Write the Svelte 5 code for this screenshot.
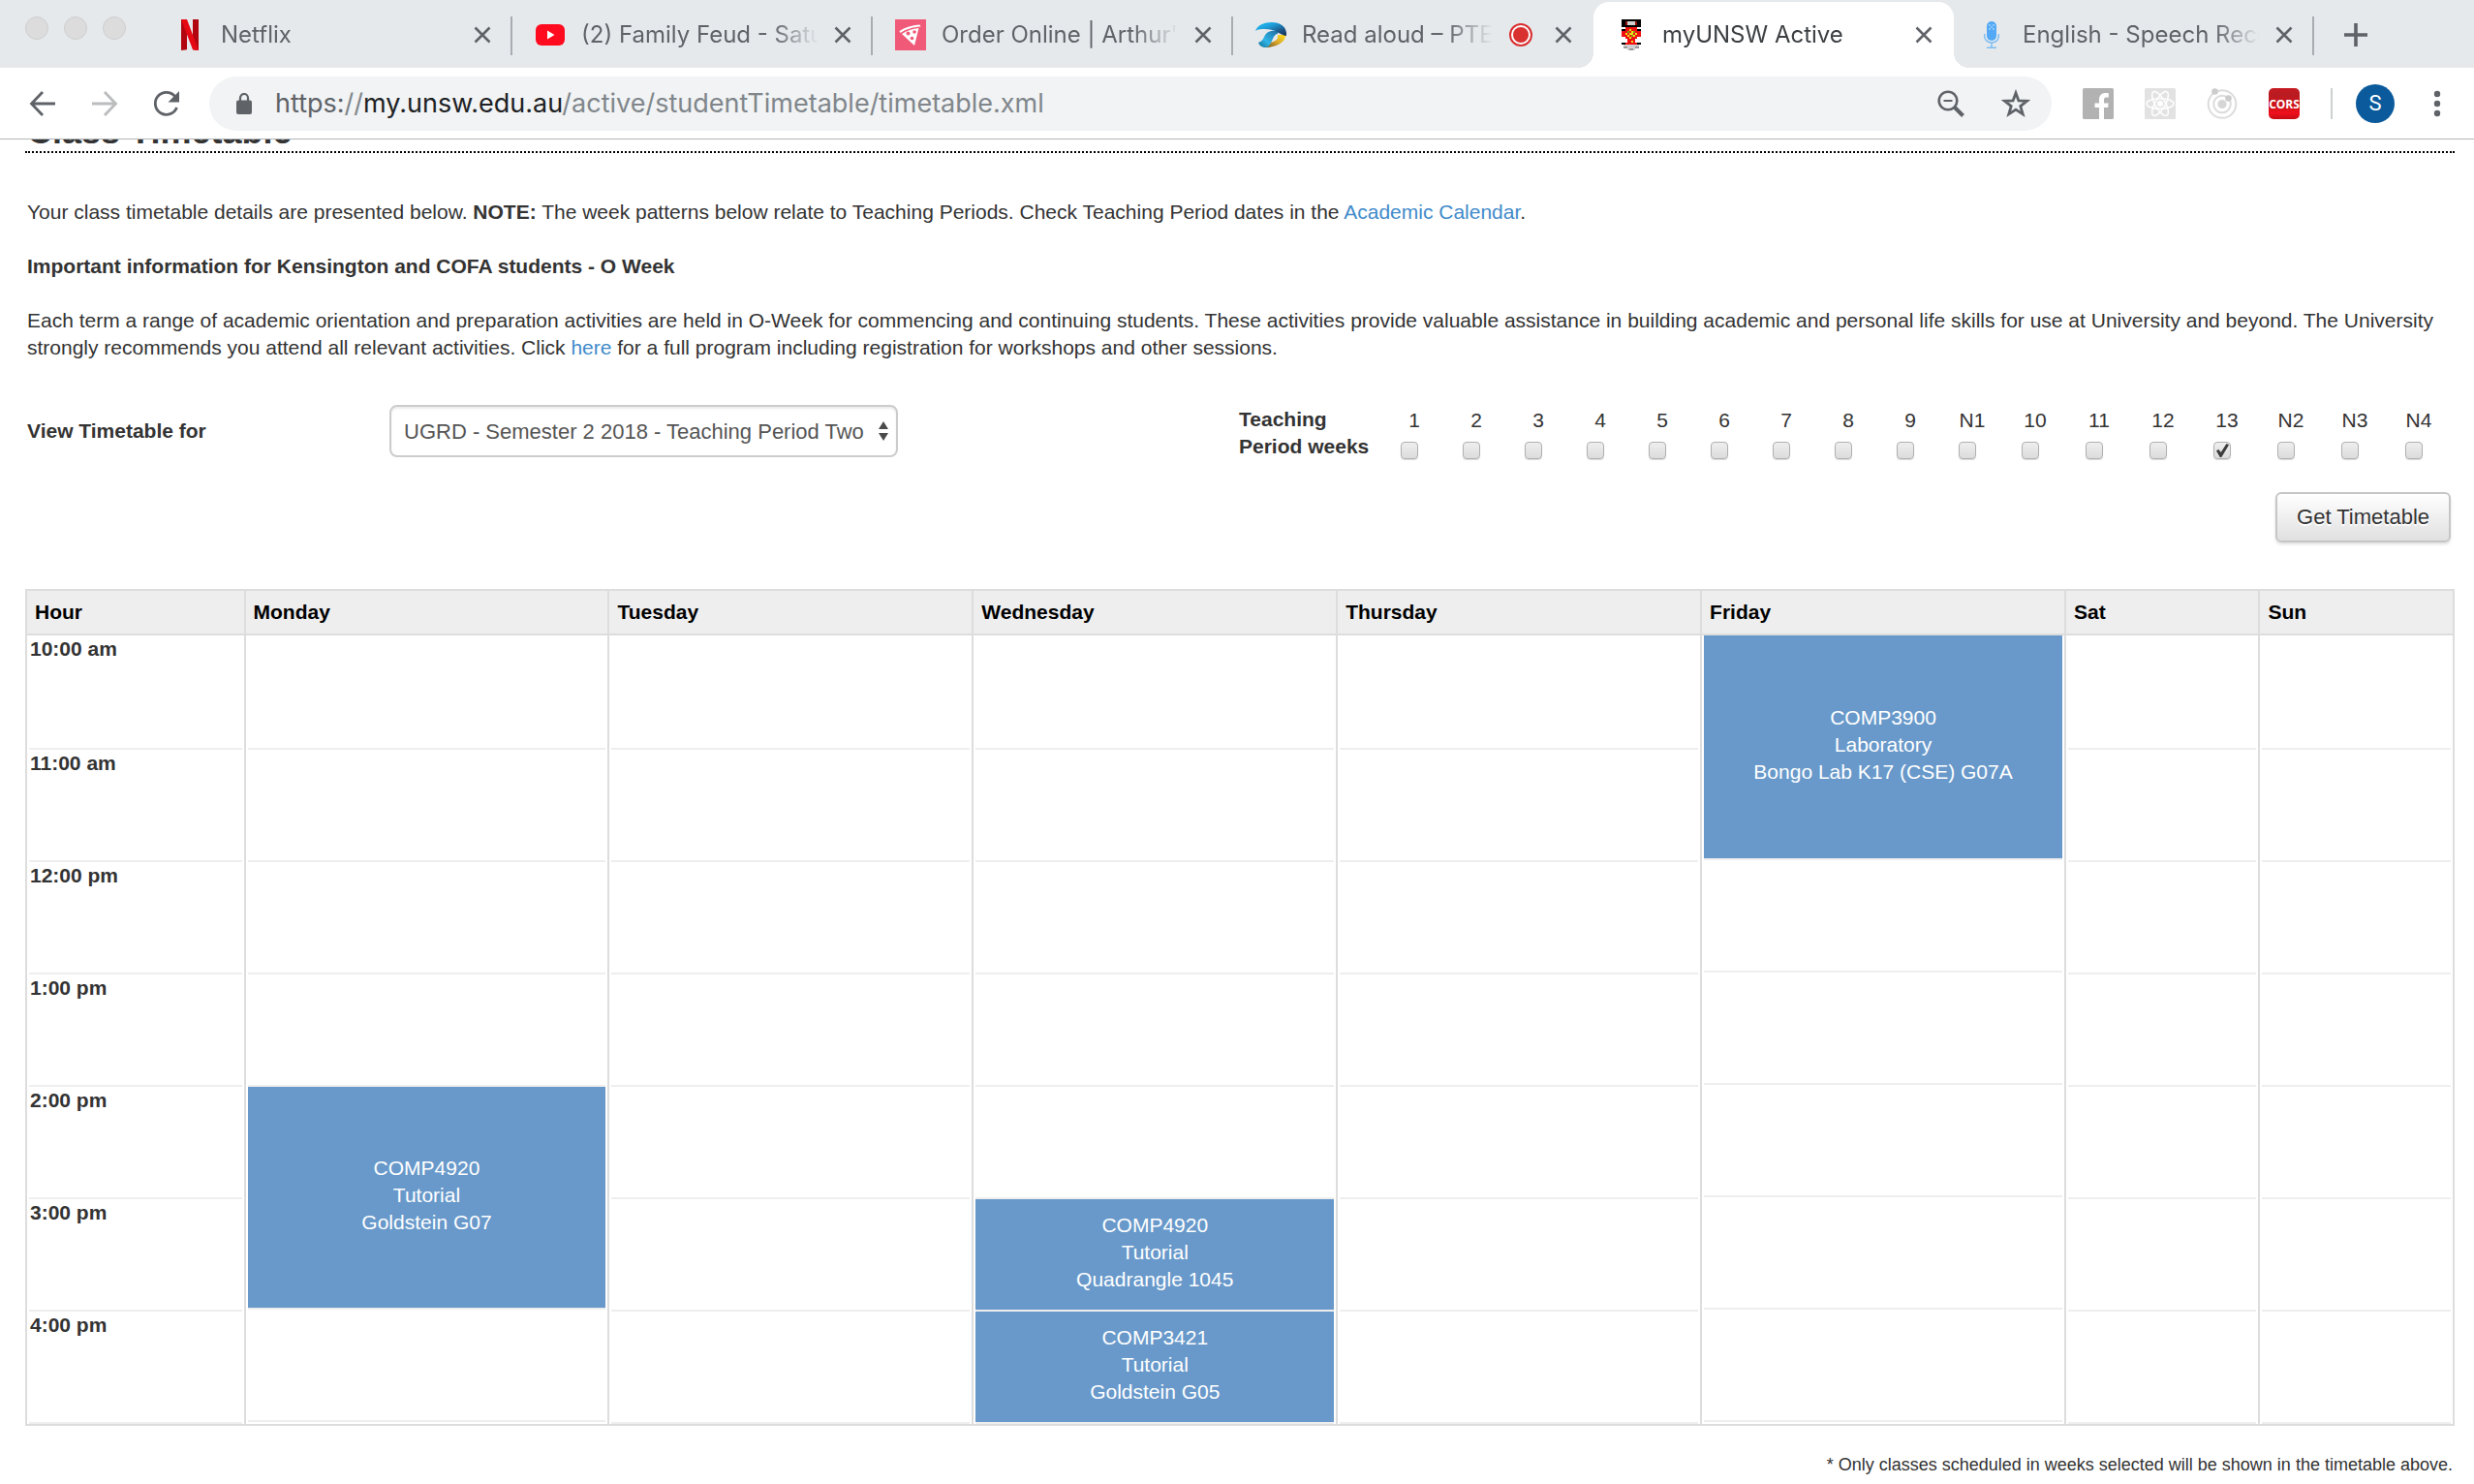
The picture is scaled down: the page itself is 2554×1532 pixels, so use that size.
<script>
  const tabs = [
    { icon: 'netflix', title: 'Netflix' },
    { icon: 'youtube', title: '(2) Family Feud - Saturday' },
    { icon: 'pizza', title: "Order Online | Arthur's" },
    { icon: 'pte', title: 'Read aloud – PTE', recording: true },
    { icon: 'crest', title: 'myUNSW Active', active: true },
    { icon: 'mic', title: 'English - Speech Recog' }
  ];

  let weeks = $state(
    ['1', '2', '3', '4', '5', '6', '7', '8', '9', 'N1', '10', '11', '12', '13', 'N2', 'N3', 'N4'].map(
      (name) => ({ name, checked: name === '13' })
    )
  );

  const days = ['Monday', 'Tuesday', 'Wednesday', 'Thursday', 'Friday', 'Sat', 'Sun'];
  const hours = ['10:00 am', '11:00 am', '12:00 pm', '1:00 pm', '2:00 pm', '3:00 pm', '4:00 pm'];
  const classes = [
    { day: 0, start: 4, span: 2, code: 'COMP4920', kind: 'Tutorial', room: 'Goldstein G07' },
    { day: 2, start: 5, span: 1, code: 'COMP4920', kind: 'Tutorial', room: 'Quadrangle 1045' },
    { day: 2, start: 6, span: 1, code: 'COMP3421', kind: 'Tutorial', room: 'Goldstein G05' },
    { day: 4, start: 0, span: 2, code: 'COMP3900', kind: 'Laboratory', room: 'Bongo Lab K17 (CSE) G07A' }
  ];

  // Cells of one hour row; hours covered by an earlier two-hour class are left out.
  function cellsAt(hour) {
    return days
      .map((_, day) => {
        const item = classes.find((c) => c.day === day && c.start <= hour && hour < c.start + c.span);
        const afterLong = classes.some((c) => c.day === day && c.span > 1 && c.start + c.span <= hour);
        return { day, item, covered: item && item.start < hour, afterLong };
      })
      .filter((c) => !c.covered);
  }
</script>

{#snippet favicon(name)}
  {#if name === 'netflix'}
    <svg width="32" height="32" viewBox="0 0 32 32" aria-hidden="true">
      <path fill="#b1060f" d="M7 0h6v31.200L7 32zM19 0h6v32l-6-.8z" />
      <path fill="#e50914" d="M7 0h6l12 32-6-.8z" />
    </svg>
  {:else if name === 'youtube'}
    <svg width="32" height="32" viewBox="0 0 32 32" aria-hidden="true">
      <rect x="1" y="5" width="30" height="22" rx="6" fill="#ff0a1e" />
      <path fill="#fff" d="M13 11.500v9l7.500-4.500z" />
    </svg>
  {:else if name === 'pizza'}
    <svg width="32" height="32" viewBox="0 0 32 32" aria-hidden="true">
      <path fill="#f05a78" d="M0 0h32v32H0z" />
      <path fill="#fff" d="M4.500 12C9 9 17 6 25.500 5.500l1 2C18 8 10.500 10.500 5.500 14zM7 15c5-3.500 11-5.500 17.500-6L20 27z" />
      <g fill="#f05a78"><circle cx="13.500" cy="14.500" r="2" /><circle cx="20" cy="13" r="1.800" /><circle cx="17.500" cy="19.500" r="1.800" /></g>
    </svg>
  {:else if name === 'pte'}
    <svg width="32" height="32" viewBox="0 0 32 32" aria-hidden="true">
      <defs>
        <linearGradient id="pte-blue" x1="0" x2="1" y1="0" y2="1">
          <stop offset="0" stop-color="#19c3f5" /><stop offset=".35" stop-color="#1fa0dc" /><stop offset=".75" stop-color="#1c4f80" /><stop offset="1" stop-color="#17314f" />
        </linearGradient>
        <linearGradient id="pte-leg" x1="1" x2="0" y1="0" y2="1">
          <stop offset="0" stop-color="#1f6ea5" /><stop offset=".6" stop-color="#30b4e6" /><stop offset="1" stop-color="#0f6f94" />
        </linearGradient>
        <linearGradient id="pte-gold" x1="1" x2="0" y1="0" y2="1">
          <stop offset="0" stop-color="#ffe31a" /><stop offset=".5" stop-color="#d9a52b" /><stop offset="1" stop-color="#6b5220" />
        </linearGradient>
      </defs>
      <path fill="url(#pte-gold)" d="M23 16l8 0c1 6-8 13-21 13 3-1 4-3 5-5 5-1 9-3 8-8z" />
      <path fill="url(#pte-leg)" d="M23 12c-9-1-12 2-14 6-1 3-3 5-6 6 1 3 4 5 8 5 4-1 5-5 7-9 1-3 3-5 5-5z" />
      <path fill="url(#pte-blue)" d="M0 12C2 6 9 3 17 3c10 0 16 6 15 14-2 0-4-1-8-3-4-3-9-4-14-4-4 0-7 0-10 2z" />
    </svg>
  {:else if name === 'crest'}
    <svg width="32" height="32" viewBox="0 0 16 16" aria-hidden="true" shape-rendering="crispEdges">
      <path fill="#000" d="M3 0h10v4H3zM3 5h2v8H3zM11 5h2v8h-2zM4 12h8v2H4z" />
      <path fill="#d0d0d0" d="M5 1h6v2H5zM4 13h8v1H4zM6 14h4v2H6z" />
      <path fill="#8c1010" d="M5 1h1v2H5zM10 1h1v2h-1z" />
      <path fill="#fff" d="M3 4h10v1H3zM3 9h2v3H3zM11 9h2v3h-2z" />
      <path fill="#f01010" d="M5 4h6v9H5zM3 6h10v3H3z" />
      <path fill="#fff" d="M4 10h2v2H4zM10 10h2v2h-2z" />
      <path fill="#e6e619" d="M7 5h1v1H7zM5 7h1v1H5zM7 7h2v1H7zM10 7h1v1h-1zM6 8h1v1H6zM9 8h1v1H9zM7 9h1v1H7zM8 6h1v1H8zM8 11h1v1H8z" />
      <path fill="#8a9a10" d="M6 6h1v1H6zM9 6h1v1H9zM8 8h1v1H8z" />
      <path fill="#999" d="M4 14h2v1H4zM10 14h2v1h-2zM7 15h2v1H7z" />
    </svg>
  {:else}
    <svg width="32" height="32" viewBox="0 0 32 32" aria-hidden="true">
      <rect x="11" y="2" width="10" height="20" rx="5" fill="#53a9f5" />
      <g fill="#d6ecff"><circle cx="14" cy="6" r=".8" /><circle cx="18" cy="6" r=".8" /><circle cx="16" cy="8" r=".8" /><circle cx="14" cy="10" r=".8" /><circle cx="18" cy="10" r=".8" /></g>
      <path fill="none" stroke="#7dbdf2" stroke-width="1.500" d="M8.700 15v2.500a7.300 6.500 0 0 0 14.600 0V15M16 24v5M11 29.300h10" />
    </svg>
  {/if}
{/snippet}

<header class="browser">
  <div class="tab-strip">
    <div class="lights" aria-hidden="true"><span></span><span></span><span></span></div>
    {#each tabs as tab, i}
      <div class="tab" class:active={tab.active} class:divided={!tab.active && !tabs[i + 1]?.active}>
        {@render favicon(tab.icon)}
        <span class="tab-title">{tab.title}</span>
        {#if tab.recording}
          <svg class="rec" width="24" height="24" viewBox="0 0 24 24" aria-label="Recording">
            <circle cx="12" cy="12" r="11" fill="#fff" stroke="#d93030" stroke-width="2" />
            <circle cx="12" cy="12" r="8" fill="#d93030" />
          </svg>
        {/if}
        <button class="icon-btn" aria-label="Close tab">
          <svg width="18" height="18" viewBox="0 0 18 18"><path d="M1.500 1.500l15 15M16.500 1.500l-15 15" fill="none" stroke="#5f6368" stroke-width="2.600" /></svg>
        </button>
      </div>
    {/each}
    <button class="icon-btn new-tab" aria-label="New tab">
      <svg width="26" height="26" viewBox="0 0 26 26"><path d="M13 1v24M1 13h24" fill="none" stroke="#5f6368" stroke-width="3.600" /></svg>
    </button>
  </div>

  <div class="toolbar">
    <nav class="nav">
      <button class="icon-btn" aria-label="Back">
        <svg width="28" height="28" viewBox="0 0 28 28"><path d="M27 14H3M14 2L2.500 14 14 26" fill="none" stroke="#5f6368" stroke-width="2.800" /></svg>
      </button>
      <button class="icon-btn" aria-label="Forward">
        <svg width="28" height="28" viewBox="0 0 28 28"><path d="M1 14h24M14 2l11.500 12L14 26" fill="none" stroke="#babcbe" stroke-width="2.800" /></svg>
      </button>
      <button class="icon-btn" aria-label="Reload">
        <svg width="28" height="28" viewBox="0 0 28 28"><path d="M24.500 18A11.500 11.500 0 1 1 22.500 6.300" fill="none" stroke="#5f6368" stroke-width="2.800" /><path fill="#5f6368" d="M27 1v11.500H15.500z" /></svg>
      </button>
    </nav>

    <div class="omnibox">
      <svg width="16" height="22" viewBox="0 0 16 22" aria-hidden="true">
        <rect y="7.500" width="16" height="14.500" rx="2" fill="#5f6368" />
        <path d="M4 8V5a4 4 0 0 1 8 0v3" fill="none" stroke="#5f6368" stroke-width="2.200" />
      </svg>
      <span class="url">https:<i>//</i><b>my.unsw.edu.au</b><i>/active/studentTimetable/timetable.xml</i></span>
      <button class="icon-btn" aria-label="Zoom">
        <svg width="28" height="28" viewBox="0 0 28 28"><circle cx="11" cy="11" r="9.300" fill="none" stroke="#5f6368" stroke-width="2.600" /><path d="M6.500 11h9" stroke="#5f6368" stroke-width="2" /><path d="M17.500 17.500l9 9" stroke="#5f6368" stroke-width="4" /></svg>
      </button>
      <button class="icon-btn" aria-label="Bookmark this page">
        <svg width="30" height="30" viewBox="0 0 30 30"><path d="M15 4l2.900 8 8.600.3-6.700 5.300 2.400 8.200-7.200-4.700-7.200 4.700 2.400-8.200-6.700-5.300 8.600-.3z" fill="none" stroke="#5f6368" stroke-width="2.800" /></svg>
      </button>
    </div>

    <div class="extensions">
      <button class="icon-btn" aria-label="Facebook">
        <svg width="32" height="32" viewBox="0 0 32 32"><rect width="32" height="32" rx="1.500" fill="#b2b2b2" /><path fill="#fff" d="M17 32V20h-4.500v-4.600H17v-3.600C17 7.500 19.500 5 23.500 5c1.600 0 2.700.1 3.300.2v4.300h-2.300c-2 0-2.500 1-2.500 2.500v3.400h4.700l-.6 4.600H22v12z" /></svg>
      </button>
      <button class="icon-btn" aria-label="React">
        <svg width="32" height="32" viewBox="0 0 32 32"><rect width="32" height="32" rx="1.500" fill="#e2e2e2" /><g fill="none" stroke="#fff" stroke-width="1.500"><ellipse cx="16" cy="16" rx="14" ry="5.200" /><ellipse cx="16" cy="16" rx="14" ry="5.200" transform="rotate(60 16 16)" /><ellipse cx="16" cy="16" rx="14" ry="5.200" transform="rotate(120 16 16)" /></g><circle cx="16" cy="16" r="3" fill="#fff" /></svg>
      </button>
      <button class="icon-btn" aria-label="Redux">
        <svg width="32" height="32" viewBox="0 0 32 32"><circle cx="16" cy="16.500" r="14.300" fill="none" stroke="#dcdcdc" stroke-width="2" /><circle cx="16" cy="16.500" r="8.800" fill="none" stroke="#dcdcdc" stroke-width="2" /><circle cx="16" cy="16.500" r="4.600" fill="#d6d6d6" /><circle cx="8.500" cy="3.500" r="3.300" fill="#ccc" /><circle cx="22.500" cy="10.500" r="3.300" fill="#ccc" /></svg>
      </button>
      <button class="icon-btn" aria-label="CORS">
        <svg width="32" height="32" viewBox="0 0 32 32">
          <defs><linearGradient id="cors" x1="0" x2="0" y1="0" y2="1"><stop offset="0" stop-color="#c61a20" /><stop offset=".2" stop-color="#b81c22" /><stop offset=".6" stop-color="#cf1118" /><stop offset=".8" stop-color="#f0101c" /><stop offset="1" stop-color="#c40c14" /></linearGradient></defs>
          <rect width="32" height="32" rx="5" fill="url(#cors)" />
          <text x="16" y="21" text-anchor="middle" class="cors">CORS</text>
        </svg>
      </button>
    </div>
    <span class="rule"></span>
    <button class="avatar" aria-label="Profile">S</button>
    <button class="icon-btn" aria-label="Menu">
      <svg width="8" height="28" viewBox="0 0 8 28"><g fill="#5f6368"><circle cx="4" cy="4" r="3.200" /><circle cx="4" cy="14" r="3.200" /><circle cx="4" cy="24" r="3.200" /></g></svg>
    </button>
  </div>
</header>

<main>
  <h1>Class Timetable</h1>

  <div class="copy">
    <p>Your class timetable details are presented below. <strong>NOTE:</strong> The week patterns below relate to Teaching Periods. Check Teaching Period dates in the <a href="#calendar">Academic Calendar</a>.</p>
    <p><strong>Important information for Kensington and COFA students - O Week</strong></p>
    <p>Each term a range of academic orientation and preparation activities are held in O-Week for commencing and continuing students. These activities provide valuable assistance in building academic and personal life skills for use at University and beyond. The University strongly recommends you attend all relevant activities. Click <a href="#oweek">here</a> for a full program including registration for workshops and other sessions.</p>
  </div>

  <form onsubmit={(e) => e.preventDefault()}>
    <div class="filters">
      <div class="term">
        <label for="term">View Timetable for</label>
        <div class="select">
          <select id="term"><option>UGRD - Semester 2 2018 - Teaching Period Two</option></select>
          <svg width="10" height="20" viewBox="0 0 10 20" aria-hidden="true"><path fill="#4a4a4a" d="M5 0l5 8H0zM5 20l5-8H0z" /></svg>
        </div>
      </div>
      <div class="weeks" role="group" aria-labelledby="weeks-label">
        <span id="weeks-label">Teaching<br />Period weeks</span>
        {#each weeks as week}
          <label class="week">{week.name}<input type="checkbox" bind:checked={week.checked} /></label>
        {/each}
      </div>
    </div>
    <button class="submit" type="submit">Get Timetable</button>
  </form>

  <table>
    <thead>
      <tr>
        <th class="hour-col" scope="col">Hour</th>
        {#each days as day}<th class:weekend={day.length === 3} scope="col">{day}</th>{/each}
      </tr>
    </thead>
    <tbody>
      {#each hours as hour, h}
        <tr>
          <th scope="row"><div class="slot">{hour}</div></th>
          {#each cellsAt(h) as cell (cell.day)}
            <td rowspan={cell.item?.span ?? 1}>
              {#if cell.item}
                <div class="slot class" class:long={cell.item.span > 1}>
                  <span>{cell.item.code}</span><span>{cell.item.kind}</span><span>{cell.item.room}</span>
                </div>
              {:else}
                <div class="slot" class:short={cell.afterLong}></div>
              {/if}
            </td>
          {/each}
        </tr>
      {/each}
    </tbody>
  </table>

  <p class="footnote">* Only classes scheduled in weeks selected will be shown in the timetable above.</p>
</main>

<style>
  :global(body) {
    background: #fff;
  }
  * {
    box-sizing: border-box;
  }
  button {
    font: inherit;
    margin: 0;
    cursor: pointer;
  }
  svg {
    display: block;
    flex: none;
  }
  .icon-btn {
    flex: none;
    padding: 0;
    border: 0;
    background: none;
  }

  /* Browser chrome */
  .browser {
    font-family: Inter, Roboto, sans-serif;
    color: #5f6368;
    border-bottom: 1px solid #b4b6b8;
  }
  .tab-strip {
    display: flex;
    height: 70px;
    padding-top: 2px;
    background: #e6e9ec;
  }
  .lights {
    display: flex;
    flex: none;
    gap: 16px;
    width: 157px;
    padding: 15px 0 0 26px;
  }
  .lights span {
    width: 24px;
    height: 24px;
    border: 1px solid #cdcecf;
    border-radius: 50%;
    background: #dcdcdc;
  }
  .tab {
    display: flex;
    flex: 0 1 372px;
    min-width: 0;
    align-items: center;
    padding: 0 22px 0 23px;
    position: relative;
    font-size: 24px;
    line-height: 32px;
  }
  .tab-title {
    flex: 1;
    min-width: 0;
    margin: 0 16px;
    overflow: hidden;
    white-space: nowrap;
    mask-image: linear-gradient(to left, transparent, #000 48px);
  }
  .rec {
    margin: 0 23px 0 1px;
  }
  .divided::after {
    content: '';
    position: absolute;
    right: 0;
    top: 15px;
    width: 2px;
    height: 40px;
    background: #a9acb0;
  }
  .tab.active {
    background: #fff;
    border-radius: 16px 16px 0 0;
    color: #3c4043;
  }
  .tab.active::before,
  .tab.active::after {
    content: '';
    position: absolute;
    bottom: 0;
    width: 16px;
    height: 16px;
  }
  .tab.active::before {
    right: 100%;
    background: radial-gradient(circle at 0 0, transparent 16px, #fff 16px);
  }
  .tab.active::after {
    left: 100%;
    background: radial-gradient(circle at 100% 0, transparent 16px, #fff 16px);
  }
  .new-tab {
    padding: 0 30px;
  }
  .toolbar {
    display: flex;
    align-items: center;
    height: 73px;
    padding: 0 34px 0 30px;
  }
  .nav {
    display: flex;
    gap: 36px;
    margin-right: 30px;
  }
  .omnibox {
    display: flex;
    flex: 1;
    min-width: 0;
    align-items: center;
    height: 56px;
    padding: 0 22px 0 28px;
    border-radius: 28px;
    background: #f1f3f4;
  }
  .url {
    flex: 1;
    min-width: 0;
    margin: 0 24px;
    overflow: hidden;
    white-space: nowrap;
    font-size: 27px;
    line-height: 36px;
  }
  .url i {
    font-style: normal;
    color: #80868b;
  }
  .url b {
    font-weight: 400;
    color: #202124;
  }
  .omnibox .icon-btn:last-child {
    margin-left: 38px;
  }
  .extensions {
    display: flex;
    gap: 32px;
    margin-left: 32px;
  }
  .cors {
    font: 700 12px 'Open Sans', sans-serif;
    fill: #fff;
  }
  .rule {
    width: 2px;
    height: 32px;
    margin: 0 24px 0 32px;
    background: #cdcfd1;
  }
  .avatar {
    width: 40px;
    height: 40px;
    margin-right: 40px;
    padding: 0;
    border: 0;
    border-radius: 50%;
    background: #0b5a9b;
    color: #fff;
    font: 22px Roboto, sans-serif;
  }

  /* Page */
  main {
    overflow: hidden;
    padding: 0 20px 0 26px;
    font-family: 'Liberation Sans', Arial, sans-serif;
    font-size: 21px;
    line-height: 28px;
    color: #333;
  }
  h1 {
    margin: -28px 0 47px;
    padding: 0 2px;
    border-bottom: 2px dotted #000;
    font-size: 36px;
    line-height: 40px;
  }
  .copy {
    padding: 0 2px;
  }
  p {
    margin: 0 0 28px;
  }
  a {
    color: #428bca;
    text-decoration: none;
  }
  form {
    display: flex;
    flex-direction: column;
    align-items: flex-end;
    margin: 45px 0 48px;
    padding: 0 4px 0 2px;
  }
  .filters {
    display: flex;
    width: 100%;
    justify-content: space-between;
    align-items: flex-start;
    margin-bottom: 33px;
  }
  .term {
    display: flex;
    align-items: center;
    font-weight: 700;
  }
  .term label {
    width: 374px;
  }
  .select {
    display: grid;
    align-items: center;
    justify-items: end;
  }
  .select > * {
    grid-area: 1 / 1;
  }
  .select svg {
    margin-right: 10px;
    pointer-events: none;
  }
  select {
    appearance: none;
    width: 525px;
    height: 54px;
    padding: 0 28px 0 13px;
    border: 2px solid #ccc;
    border-radius: 8px;
    background: #fff;
    box-shadow: inset 0 2px 2px rgba(0, 0, 0, 0.075);
    font: 22px 'Liberation Sans', Arial, sans-serif;
    color: #555;
  }
  .weeks {
    display: grid;
    grid-template-columns: 149px repeat(10, 64px) repeat(7, 66px);
    padding-top: 1px;
  }
  #weeks-label {
    font-weight: 700;
  }
  .week {
    display: flex;
    flex-direction: column;
    align-items: center;
    gap: 8px;
    padding-top: 1px;
  }
  input {
    appearance: none;
    width: 18px;
    height: 18px;
    margin: 0 10px 0 0;
    border: 1px solid #b0b0b0;
    border-radius: 4px;
    background: linear-gradient(#eee, #dcdcdc);
    box-shadow: 0 1px 1px rgba(0, 0, 0, 0.15);
  }
  input:checked::after {
    content: '';
    display: block;
    width: 16px;
    height: 16px;
    background: #3c3c3c;
    clip-path: polygon(12% 52%, 28% 44%, 42% 62%, 78% 6%, 94% 14%, 46% 94%, 36% 94%);
  }
  .submit {
    height: 52px;
    padding: 0 20px;
    border: 2px solid #c6c6c6;
    border-radius: 6px;
    background: linear-gradient(#fff, #e0e0e0);
    box-shadow: 0 2px 3px rgba(0, 0, 0, 0.12);
    font-size: 22px;
    color: #333;
    text-shadow: 0 2px 1px #fff;
  }

  table {
    width: 100%;
    table-layout: fixed;
    border: 2px solid #ddd;
    border-left: 0;
    border-collapse: separate;
    border-spacing: 0;
  }
  th,
  td {
    padding: 0 2px;
    border-left: 2px solid #ddd;
    text-align: left;
    vertical-align: top;
  }
  thead th {
    width: 15%;
    padding: 8px;
    border-bottom: 2px solid #ddd;
    background: #eee;
    color: #000;
  }
  thead .hour-col {
    width: 9%;
  }
  thead .weekend {
    width: 8%;
  }
  .slot {
    height: 116px;
    border-bottom: 2px solid #eee;
  }
  th .slot {
    padding-left: 1px;
  }
  tbody tr:first-child .slot {
    height: 118px;
  }
  .slot.short {
    height: 114px;
  }
  .slot.class {
    display: flex;
    flex-direction: column;
    align-items: center;
    justify-content: center;
    padding-bottom: 4px;
    background: #6899ca;
    color: #fff;
  }
  .slot.class.long {
    height: 230px;
  }
  tbody tr:first-child .slot.class.long {
    height: 232px;
  }
  .footnote {
    margin: 26px 2px 0;
    font-size: 18px;
    text-align: right;
  }
</style>
